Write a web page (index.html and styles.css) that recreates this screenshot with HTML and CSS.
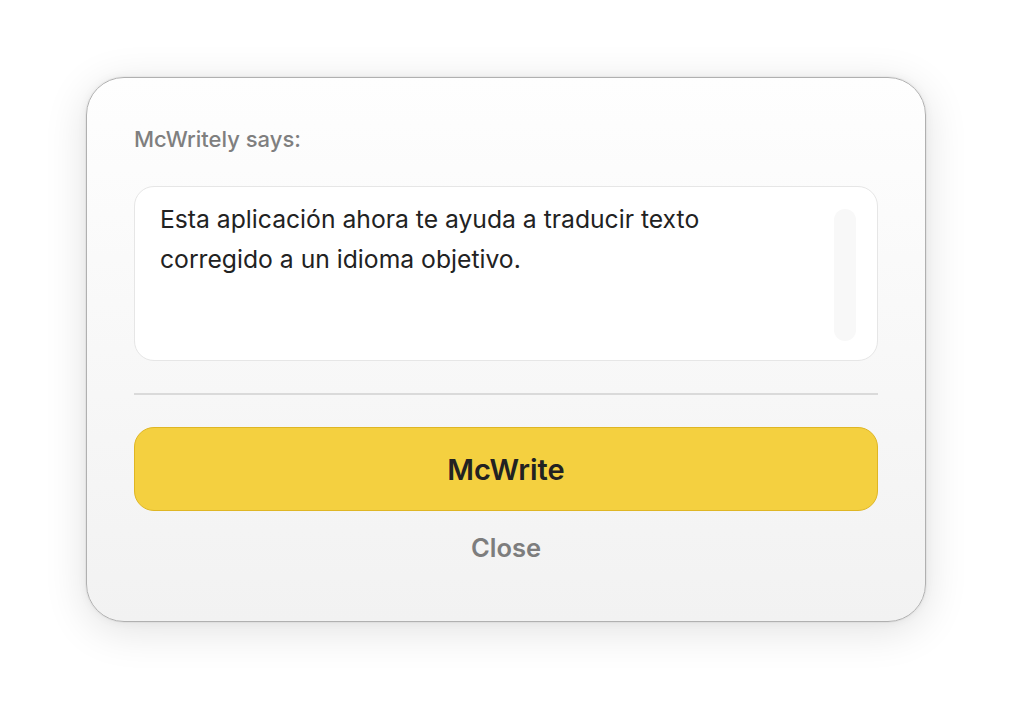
FILE: index.html
```html
<!DOCTYPE html>
<html lang="es">
<head>
<meta charset="utf-8">
<title>McWritely</title>
<link rel="stylesheet" href="styles.css">
</head>
<body>
<div class="stage">
  <div class="dialog">
    <div class="label">McWritely says:</div>
    <div class="message">
      <p class="message-text">Esta aplicación ahora te ayuda a traducir texto corregido a un idioma objetivo.</p>
      <div class="scrollbar"></div>
    </div>
    <div class="divider"></div>
    <button class="primary">McWrite</button>
    <button class="close">Close</button>
  </div>
</div>
</body>
</html>
```

FILE: styles.css
```css
* { box-sizing: border-box; }
html, body { margin: 0; padding: 0; background: #ffffff; }
body { font-family: Inter, "Noto Sans", sans-serif; width: 1012px; height: 716px; overflow: hidden; }

.stage { padding: 77px 0 0 86px; }

.dialog {
  width: 840px;
  height: 545px;
  border: 1px solid #b0b0b0;
  border-radius: 38px;
  background: linear-gradient(#fefefe, #f2f2f2);
  box-shadow: 0 0 0 1px rgba(0,0,0,0.03), 0 0 10px rgba(0,0,0,0.05), 0 8px 44px rgba(0,0,0,0.12);
  padding: 48px 47px 0 47px;
  display: flex;
  flex-direction: column;
}

.label {
  font-size: 22px;
  line-height: 26px;
  font-weight: 500;
  color: #7f7f7f;
}

.message {
  margin-top: 34px;
  height: 175px;
  background: #ffffff;
  border: 1px solid #e6e6e6;
  border-radius: 20px;
  display: flex;
  padding: 12px 21px 0 25px;
}

.message-text {
  margin: 0;
  flex: 1;
  font-size: 24.7px;
  line-height: 40px;
  color: #222222;
  padding-right: 100px;
}

.scrollbar {
  width: 22px;
  height: 132px;
  margin-top: 10px;
  border-radius: 11px;
  background: #f8f8f8;
}

.divider {
  margin-top: 32px;
  height: 2px;
  background: #dadada;
}

.primary {
  margin-top: 32px;
  height: 84px;
  border: 1px solid #dfb624;
  border-radius: 20px;
  background: #f4d040;
  font-family: Inter, "Noto Sans", sans-serif;
  font-size: 29px;
  font-weight: 600;
  color: #222222;
  cursor: pointer;
}

.close {
  margin-top: 20px;
  align-self: center;
  border: none;
  background: transparent;
  font-family: Inter, "Noto Sans", sans-serif;
  font-size: 25.5px;
  font-weight: 600;
  color: #7d7d7d;
  line-height: 34px;
  padding: 0;
  cursor: pointer;
}
```
